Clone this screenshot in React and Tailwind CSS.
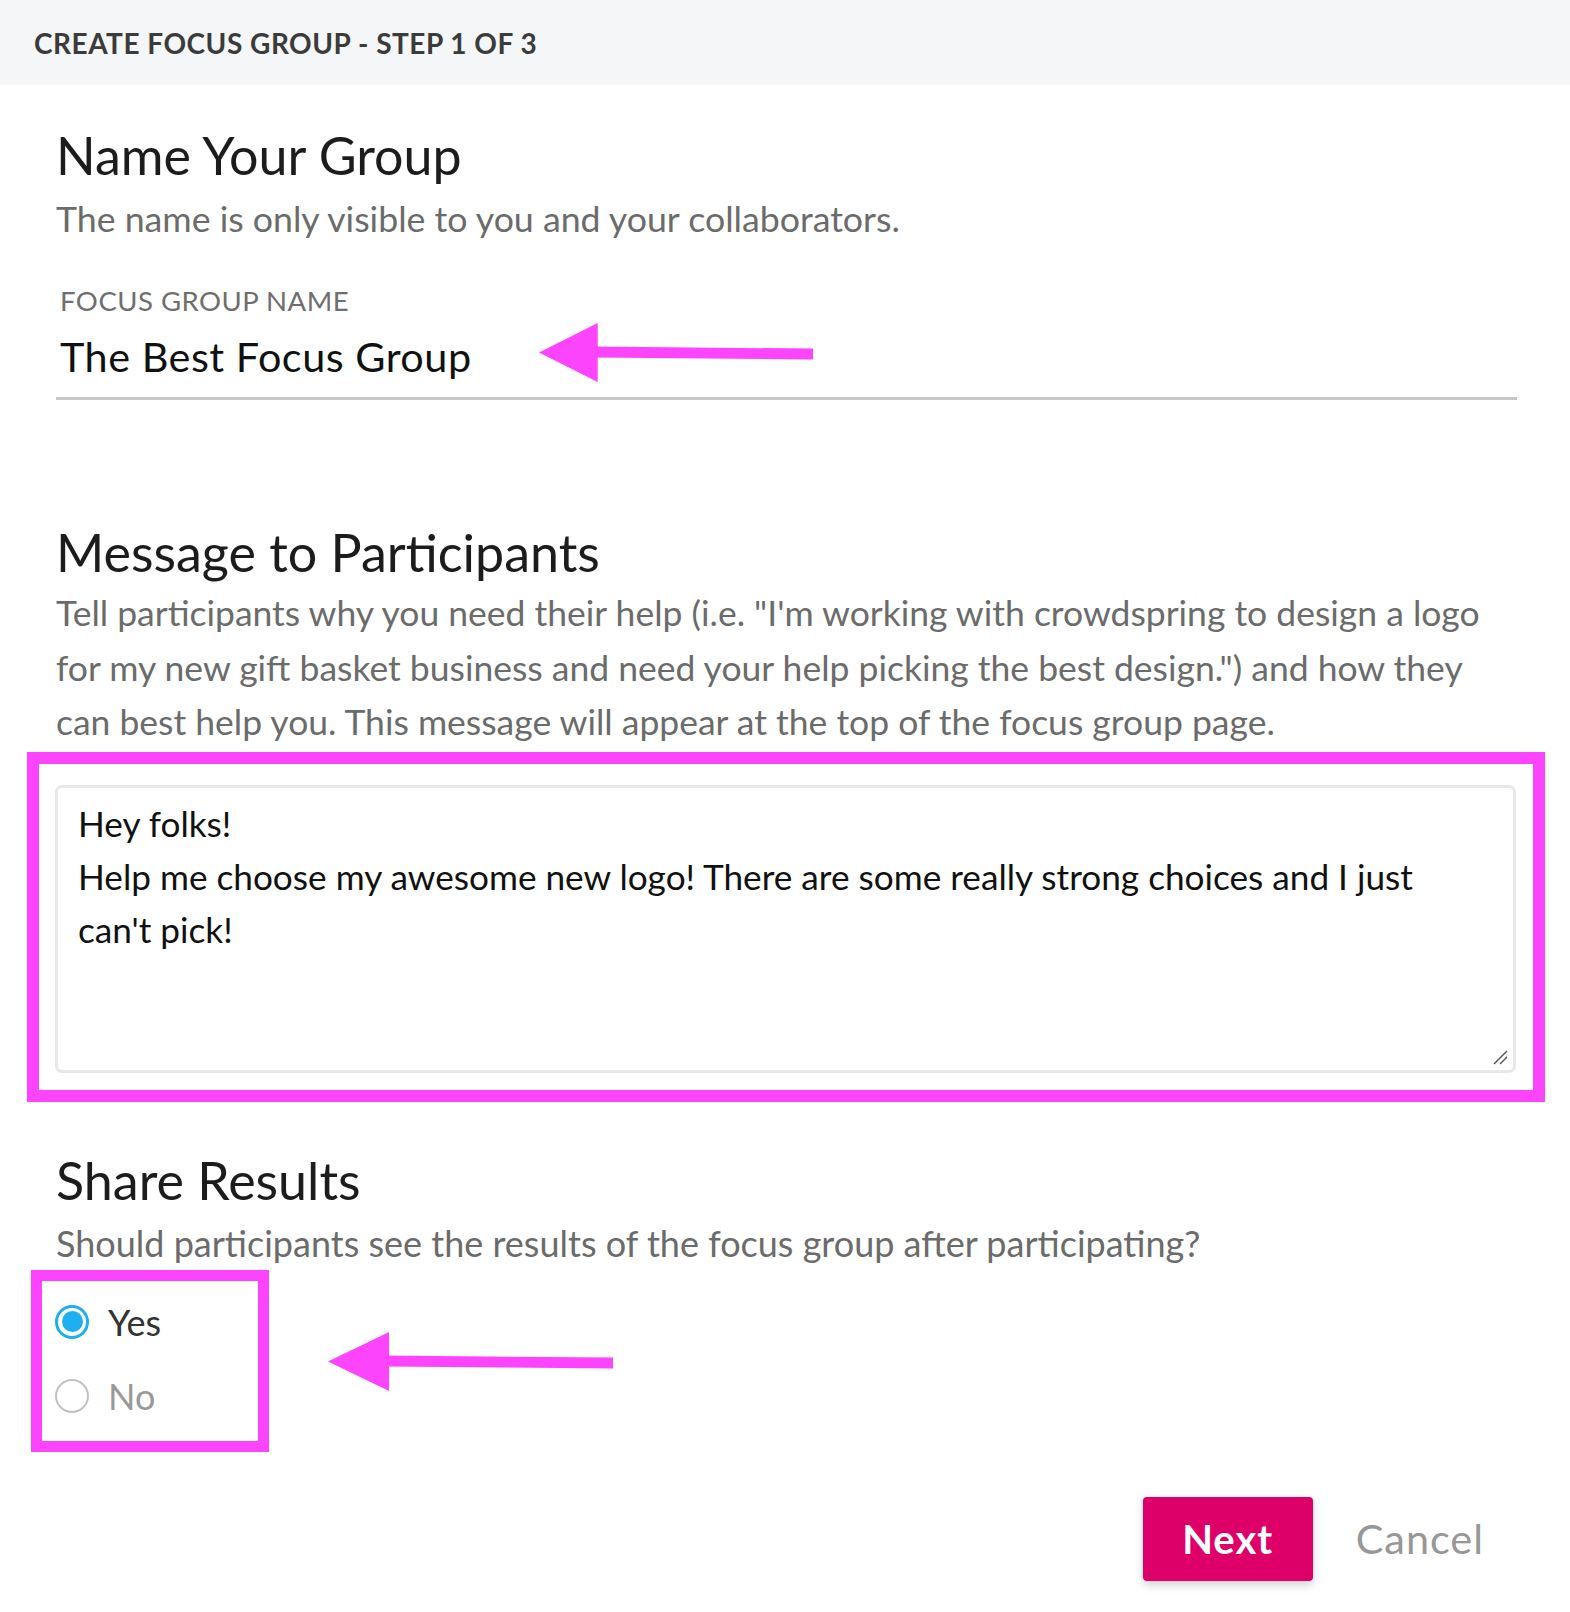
import React from 'react';

function Arrow({ className }) {
  return (
    <svg className={className} viewBox="0 0 280 60" preserveAspectRatio="none" fill="#fc44fc">
      <polygon points="0,30 60,0 60,60" />
      <polygon points="55,24 280,26 280,37 55,35" />
    </svg>
  );
}

function Radio({ checked, label }) {
  return (
    <label className="flex items-center gap-[19px] h-[74px]">
      <span
        className={
          checked
            ? 'w-[34px] h-[34px] rounded-full border-[3px] border-[#1eaff0] flex items-center justify-center'
            : 'w-[34px] h-[34px] rounded-full border-2 border-[#c2c2c2]'
        }
      >
        {checked && <span className="w-[21px] h-[21px] rounded-full bg-[#1eaff0]" />}
      </span>
      <span className={checked ? 'text-[36px] text-[#333]' : 'text-[36px] text-[#999]'}>{label}</span>
    </label>
  );
}

export default function App() {
  return (
    <div className="w-[1570px] min-h-[1612px] bg-white font-['Lato','Open_Sans',sans-serif]">
      <div className="h-[85px] bg-[#f5f6f7] flex items-center pl-[34px]">
        <h1 className="text-[28px] font-bold tracking-[0.5px] text-[#3b3b3b] uppercase">
          Create Focus Group - Step 1 of 3
        </h1>
      </div>

      <div className="pl-[56px] pr-[53px]">
        <h2 className="mt-[40px] text-[52px] leading-[60px] text-[#1c1c1c]">Name Your Group</h2>
        <p className="mt-[9px] text-[35.7px] leading-[50px] text-[#6b6b6b]">
          The name is only visible to you and your collaborators.
        </p>

        <div className="relative mt-[40px] pl-[4px] border-b-[3px] border-[#c6c6c6] pb-[16px]">
          <div className="text-[27.5px] leading-[34px] tracking-[0.5px] text-[#6e6e6e] uppercase">Focus Group Name</div>
          <div className="mt-[13px] text-[41.4px] leading-[50px] tracking-[0.5px] text-[#111]">The Best Focus Group</div>
          <Arrow className="absolute left-[483px] top-[39px] w-[274px] h-[59px]" />
        </div>

        <h2 className="mt-[122px] text-[52px] leading-[60px] text-[#1c1c1c]">Message to Participants</h2>
        <p className="mt-[4px] text-[35.5px] leading-[54.5px] text-[#6b6b6b]">
          Tell participants why you need their help (i.e. "I'm working with crowdspring to design a logo
          <br />
          for my new gift basket business and need your help picking the best design.") and how they
          <br />
          can best help you. This message will appear at the top of the focus group page.
        </p>
      </div>

      <div className="ml-[27px] mr-[25px] mt-[2px] border-[12px] border-[#fc44fc] pl-[16px] pr-[17px] pt-[21px] pb-[17px]">
        <div className="relative">
          <textarea
            readOnly
            className="block w-full h-[288px] resize-none rounded-[7px] border-[3px] border-[#e8e8eb] pl-[20px] pr-[24px] pt-[9px] text-[35.2px] leading-[53px] text-[#111] outline-none"
            value={"Hey folks!\nHelp me choose my awesome new logo! There are some really strong choices and I just can't pick!"}
          />
          <svg className="absolute right-[8px] bottom-[8px] w-[16px] h-[16px]" viewBox="0 0 16 16" stroke="#555" strokeWidth="1.5">
            <line x1="2" y1="15" x2="15" y2="2" />
            <line x1="8" y1="15" x2="15" y2="8" />
          </svg>
        </div>
      </div>

      <div className="pl-[56px] pr-[53px]">
        <h2 className="mt-[48px] text-[52px] leading-[60px] text-[#1c1c1c]">Share Results</h2>
        <p className="mt-[8px] text-[36px] leading-[50px] text-[#6b6b6b]">
          Should participants see the results of the focus group after participating?
        </p>
        <div className="relative mt-[2px]">
          <div className="-ml-[25px] w-[238px] border-[11px] border-[#fc44fc] pl-[13px] pt-[4px] pb-[8px]">
            <Radio checked label="Yes" />
            <Radio label="No" />
          </div>
          <Arrow className="absolute left-[272px] top-[62px] w-[285px] h-[59px]" />
        </div>

        <div className="flex justify-end items-center mt-[45px] pr-[33px]">
          <button className="w-[170px] h-[84px] rounded-[4px] bg-[#de0068] text-white text-[40px] font-bold tracking-[1px] shadow-[0_4px_10px_rgba(0,0,0,0.18)]">
            Next
          </button>
          <button className="ml-[43px] text-[41.4px] text-[#979797] tracking-[1px]">Cancel</button>
        </div>
      </div>
    </div>
  );
}
